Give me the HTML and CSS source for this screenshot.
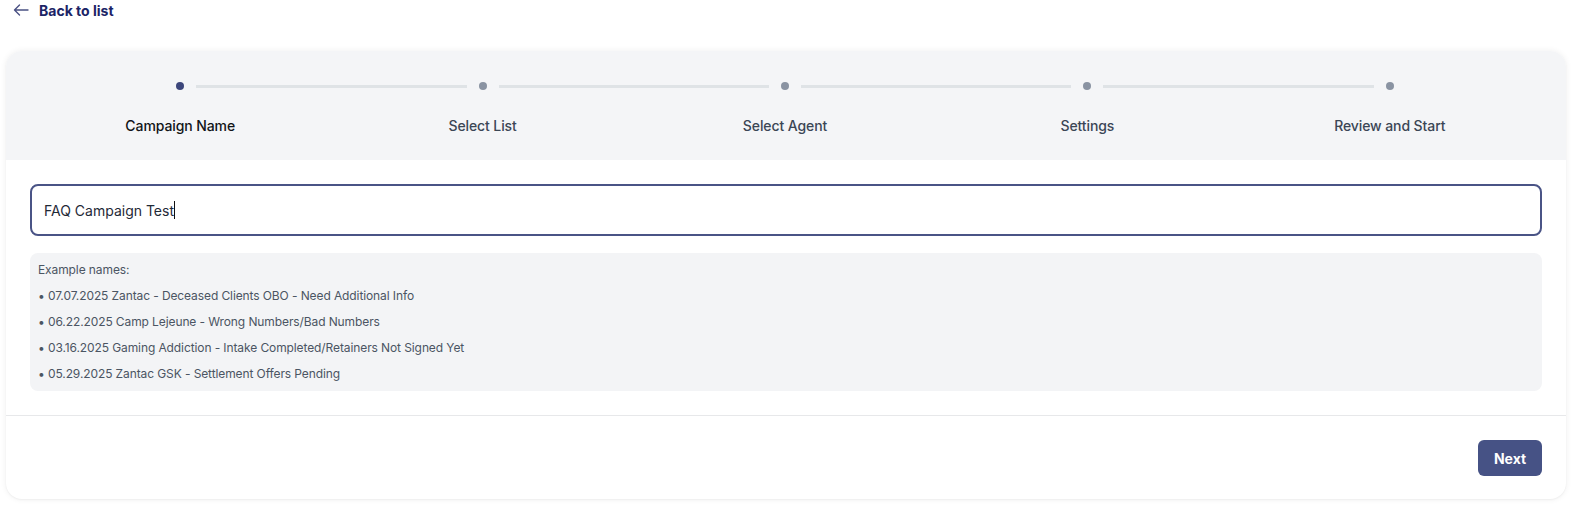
FILE: index.html
```html
<!DOCTYPE html>
<html lang="en">
<head>
<meta charset="utf-8">
<title>New Campaign</title>
<link rel="stylesheet" href="styles.css">
</head>
<body>
<div class="page">
  <a class="back" href="#">
    <svg class="back-icon" width="16" height="12" viewBox="0 0 16 12" fill="none" stroke="currentColor" stroke-width="1.4" stroke-linecap="round" stroke-linejoin="round"><path d="M15 6H1.5M6.5 1L1.5 6l5 5"/></svg>
    <span>Back to list</span>
  </a>
  <div class="card">
    <div class="stepper">
      <div class="step active first"><div class="track"><span class="dot"></span></div><div class="label">Campaign Name</div></div>
      <div class="step"><div class="track"><span class="dot"></span></div><div class="label">Select List</div></div>
      <div class="step"><div class="track"><span class="dot"></span></div><div class="label">Select Agent</div></div>
      <div class="step"><div class="track"><span class="dot"></span></div><div class="label">Settings</div></div>
      <div class="step last"><div class="track"><span class="dot"></span></div><div class="label">Review and Start</div></div>
    </div>
    <div class="body">
      <div class="input"><span class="value">FAQ Campaign Test</span><span class="caret"></span></div>
      <div class="examples">
        <div class="ex">Example names:</div>
        <div class="ex">• 07.07.2025 Zantac - Deceased Clients OBO - Need Additional Info</div>
        <div class="ex">• 06.22.2025 Camp Lejeune - Wrong Numbers/Bad Numbers</div>
        <div class="ex">• 03.16.2025 Gaming Addiction - Intake Completed/Retainers Not Signed Yet</div>
        <div class="ex">• 05.29.2025 Zantac GSK - Settlement Offers Pending</div>
      </div>
    </div>
    <div class="footer">
      <button class="next">Next</button>
    </div>
  </div>
</div>
</body>
</html>
```

FILE: styles.css
```css
* { box-sizing: border-box; }
html, body { margin: 0; padding: 0; background: #ffffff; }
body { font-family: Inter, "Noto Sans", "Liberation Sans", sans-serif; color: #1f2937; }
.page { padding: 0 10px 6px 6px; }
.back {
  display: flex; align-items: center; gap: 10px;
  height: 20px; padding-left: 7px;
  text-decoration: none; color: #1b2466;
  font-weight: 700; font-size: 14px;
}
.back-icon { color: #4a5183; }
.card {
  margin-top: 31px;
  width: 1560px;
  background: #fff;
  border-radius: 16px;
  box-shadow: 0 0 6px rgba(0,0,0,0.07), 0 1px 2px rgba(0,0,0,0.04);
  overflow: hidden;
}
.stepper {
  background: #f4f5f7;
  height: 109px;
  display: grid;
  grid-template-columns: repeat(5, 1fr);
  padding: 31px 25px 0 23px;
}
.step { display: flex; flex-direction: column; align-items: stretch; }
.track { position: relative; height: 8px; display: flex; justify-content: center; align-items: center; }
.track::before, .track::after {
  content: ""; position: absolute; top: 3px; height: 3px; background: #dfe3e6;
}
.track::before { left: 0; right: calc(50% + 16px); }
.track::after { left: calc(50% + 16px); right: 0; }
.first .track::before, .last .track::after { display: none; }
.dot { width: 8px; height: 8px; border-radius: 50%; background: #8a93a2; }
.active .dot { background: #3c467b; }
.label { margin-top: 26px; text-align: center; font-size: 14px; font-weight: 500; color: #3b4655; line-height: 20px; letter-spacing: -0.1px; }
.active .label { color: #111418; }
.body { padding: 24px 24px 24px; border-bottom: 1px solid #e7e8ea; }
.input {
  height: 52px;
  border: 2px solid #4a5486;
  border-radius: 8px;
  display: flex; align-items: center;
  padding-left: 12px;
  font-size: 14px; color: #1f2937;
}
.caret { display: inline-block; width: 1px; height: 18px; background: #111; margin-left: 0; }
.examples {
  margin-top: 17px;
  background: #f3f4f6;
  border-radius: 8px;
  padding: 8px 8px;
  display: flex; flex-direction: column; gap: 8px;
}
.ex { font-size: 12px; line-height: 18px; color: #4b5563; letter-spacing: -0.1px; }
.footer { display: flex; justify-content: flex-end; padding: 24px 24px 23px; }
.next {
  width: 64px; height: 36px;
  border: none; border-radius: 6px;
  background: #465285; color: #fff;
  font-family: inherit; font-weight: 700; font-size: 14px;
}
```
